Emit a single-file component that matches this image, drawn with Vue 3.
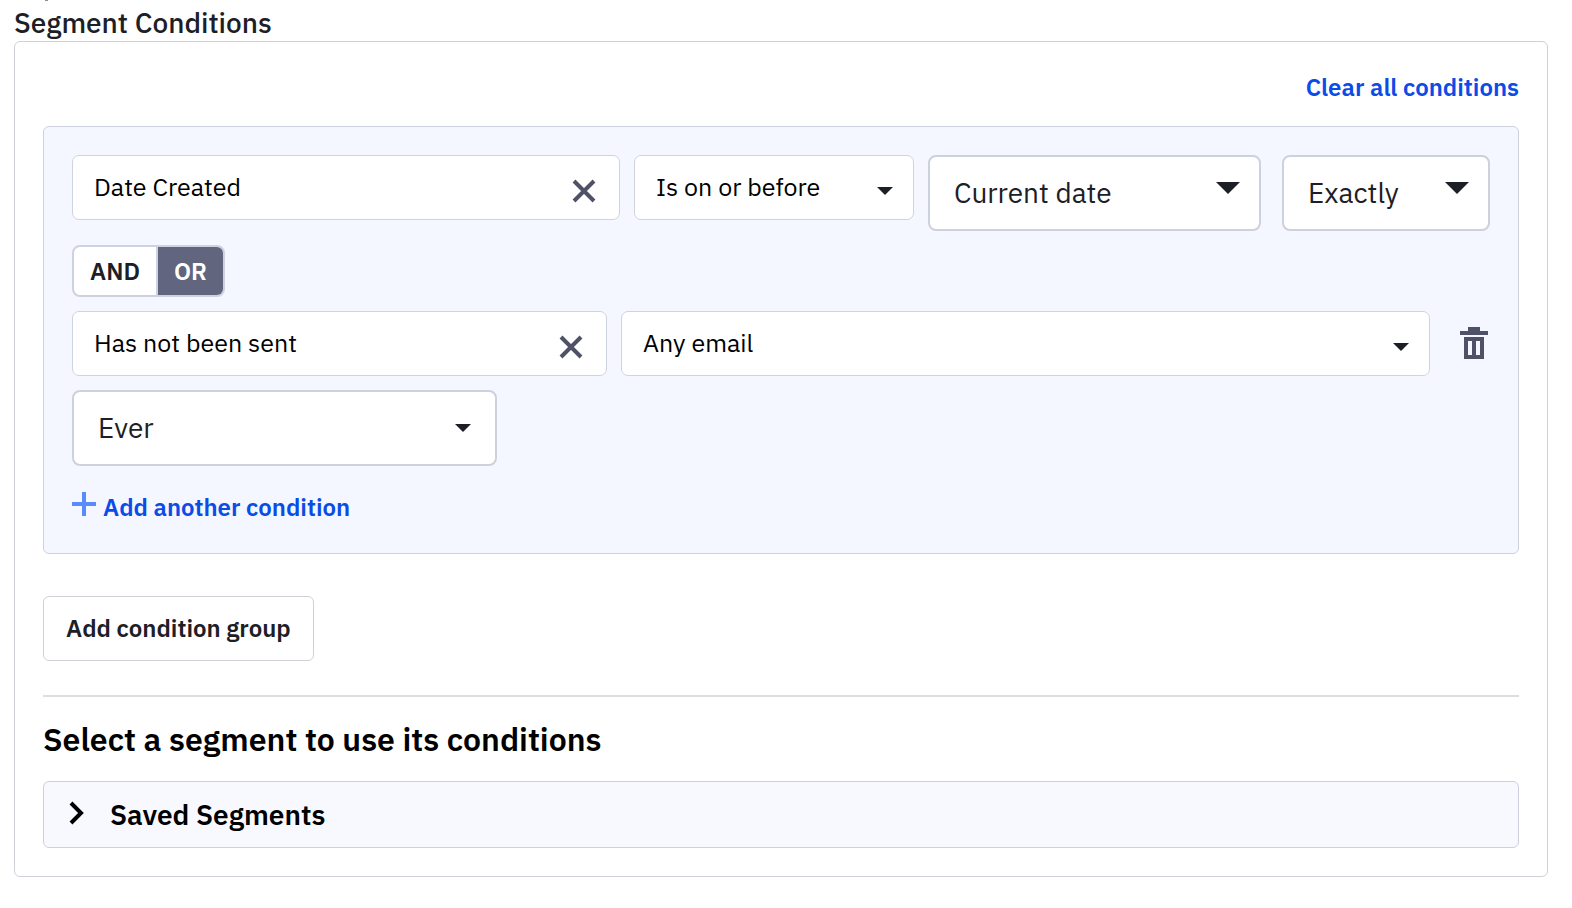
<script setup>
import { ref } from 'vue'

const attribute = ref('Date Created')
const comparison = ref('Is on or before')
const dateBase = ref('Current date')
const precision = ref('Exactly')
const operator = ref('OR')
const activity = ref('Has not been sent')
const email = ref('Any email')
const period = ref('Ever')
const savedOpen = ref(false)
</script>

<template>
  <main class="page">
    <h2 class="title">Segment Conditions</h2>
    <section class="panel">
      <div class="toolbar">
        <button class="link" type="button">Clear all conditions</button>
      </div>

      <div class="group">
        <div class="row">
          <div class="field w-attribute">
            <input v-model="attribute" class="control" type="text" aria-label="Attribute" />
            <button class="clear" type="button" aria-label="Clear attribute" @click="attribute = ''">
              <svg width="24" height="24" viewBox="0 0 24 24"><path d="M2 2L22 22M22 2L2 22" /></svg>
            </button>
          </div>
          <div class="field w-comparison">
            <select v-model="comparison" class="control" aria-label="Comparison">
              <option>Is on or before</option>
              <option>Is on or after</option>
            </select>
            <svg class="caret" width="16" height="8" viewBox="0 0 16 8"><path d="M0 0H16L8 8Z" /></svg>
          </div>
          <div class="field large w-date">
            <select v-model="dateBase" class="control" aria-label="Date">
              <option>Current date</option>
              <option>Specific date</option>
            </select>
            <svg class="caret big" width="24" height="12" viewBox="0 0 24 12"><path d="M0 0H24L12 12Z" /></svg>
          </div>
          <div class="field large w-precision">
            <select v-model="precision" class="control" aria-label="Precision">
              <option>Exactly</option>
              <option>Plus</option>
            </select>
            <svg class="caret big" width="24" height="12" viewBox="0 0 24 12"><path d="M0 0H24L12 12Z" /></svg>
          </div>
        </div>

        <div class="toggle" role="radiogroup" aria-label="Operator">
          <label class="option">
            <input v-model="operator" type="radio" name="operator" value="AND" />
            <span>AND</span>
          </label>
          <label class="option">
            <input v-model="operator" type="radio" name="operator" value="OR" />
            <span>OR</span>
          </label>
        </div>

        <div class="row">
          <div class="field w-activity">
            <input v-model="activity" class="control" type="text" aria-label="Activity" />
            <button class="clear" type="button" aria-label="Clear activity" @click="activity = ''">
              <svg width="24" height="24" viewBox="0 0 24 24"><path d="M2 2L22 22M22 2L2 22" /></svg>
            </button>
          </div>
          <div class="field w-email">
            <select v-model="email" class="control" aria-label="Email">
              <option>Any email</option>
            </select>
            <svg class="caret" width="16" height="8" viewBox="0 0 16 8"><path d="M0 0H16L8 8Z" /></svg>
          </div>
          <button class="trash" type="button" aria-label="Delete condition">
            <svg width="28" height="32" viewBox="0 0 28 32">
              <path fill-rule="evenodd" d="M8 0H20V4H28V8H0V4H8ZM4 10H24V32H4ZM8 14V28H12V14ZM16 14V28H20V14Z" />
            </svg>
          </button>
        </div>

        <div class="field large w-period">
          <select v-model="period" class="control" aria-label="Period">
            <option>Ever</option>
          </select>
          <svg class="caret mid" width="16" height="8" viewBox="0 0 16 8"><path d="M0 0H16L8 8Z" /></svg>
        </div>

        <button class="link add" type="button">
          <svg width="24" height="24" viewBox="0 0 24 24"><path d="M12 0V24M0 12H24" /></svg>
          <span>Add another condition</span>
        </button>
      </div>

      <button class="add-group" type="button">Add condition group</button>

      <hr class="divider" />

      <h3 class="subtitle">Select a segment to use its conditions</h3>
      <button class="saved" type="button" :aria-expanded="savedOpen" @click="savedOpen = !savedOpen">
        <svg width="16" height="24" viewBox="0 0 16 24"><path d="M2 2L12 12L2 22" /></svg>
        <span>Saved Segments</span>
      </button>
    </section>
  </main>
</template>

<style>
body {
  background: #fff;
}
</style>

<style scoped>
.page {
  position: relative;
  box-sizing: border-box;
  padding: 5px 24px 24px 14px;
  font-family: "IBM Plex Sans", "Open Sans", "Noto Sans", sans-serif;
  font-size: 24px;
  color: #1c2026;
}
.page::before {
  content: "";
  position: absolute;
  top: 0;
  left: 45px;
  width: 3px;
  height: 1px;
  background: #8b8d91;
}
.page * {
  box-sizing: border-box;
}
button,
input,
select {
  margin: 0;
  padding: 0;
  border: 0;
  background: none;
  color: inherit;
  font: inherit;
}
svg {
  display: block;
}
.title {
  margin: 0;
  font-size: 28px;
  line-height: 36px;
  font-weight: 500;
}
.panel {
  padding: 28px;
  border: 1px solid #cfd1d8;
  border-radius: 6px;
}
.toolbar {
  display: flex;
  justify-content: flex-end;
  margin-bottom: 22px;
}
.link {
  color: #0b4ce6;
  font-weight: 600;
  line-height: 34px;
}
.group {
  display: flex;
  flex-direction: column;
  align-items: flex-start;
  gap: 14px;
  padding: 28px;
  border: 1px solid #cdd1dd;
  border-radius: 6px;
  background: #f4f7ff;
}
.row {
  display: flex;
  align-items: flex-start;
  gap: 14px;
  width: 100%;
}
.field {
  position: relative;
  height: 65px;
  border: 1px solid #cfd3df;
  border-radius: 7px;
  background: #fff;
  color: #000;
  font-size: 25px;
}
.large {
  height: 76px;
  border: 2px solid #cdd1dd;
  border-radius: 8px;
  color: #1c2026;
  font-size: 28px;
}
.control {
  display: block;
  width: 100%;
  height: 100%;
  padding: 0 60px 2px 21px;
  appearance: none;
}
.large .control {
  padding-left: 24px;
}
.w-attribute { flex: 546 1 0; }
.w-comparison { flex: 278 1 0; }
.w-date { flex: 329 1 0; }
.w-precision {
  flex: 204 1 0;
  margin-left: 7px;
}
.w-activity { flex: 533 1 0; }
.w-email { flex: 807 1 0; }
.w-period { width: 30%; }
.clear {
  position: absolute;
  top: 23px;
  right: 23px;
}
.clear path {
  fill: none;
  stroke: #4f5266;
  stroke-width: 4;
}
.caret {
  position: absolute;
  top: 31px;
  right: 20px;
  fill: #1c2026;
  pointer-events: none;
}
.big {
  top: 25px;
  right: 19px;
}
.mid {
  top: 32px;
  right: 24px;
}
.toggle {
  display: flex;
  height: 52px;
  border: 2px solid #cdd1e0;
  border-radius: 8px;
  background: #fff;
  font-weight: 600;
  line-height: 48px;
  overflow: hidden;
}
.option {
  position: relative;
}
.option + .option {
  border-left: 2px solid #cdd1e0;
}
.option input {
  position: absolute;
  inset: 0;
  opacity: 0;
}
.option span {
  display: block;
  padding: 0 16px;
}
.option input:checked + span {
  background: #61657d;
  color: #fff;
}
.trash {
  margin: 16px 2px 0 16px;
  fill: #4f5266;
}
.add {
  display: flex;
  gap: 7px;
  margin: 10px 0 1px;
}
.add svg {
  margin-top: 2px;
}
.add path {
  fill: none;
  stroke: #5a8bfa;
  stroke-width: 4;
}
.add-group {
  display: block;
  height: 65px;
  margin-top: 42px;
  padding: 0 22px 2px;
  border: 1px solid #cfd1d8;
  border-radius: 6px;
  font-weight: 600;
}
.divider {
  height: 2px;
  margin: 34px 0 20px;
  border: 0;
  background: #dcdee1;
}
.subtitle {
  margin: 0 0 19px;
  color: #000;
  font-size: 32px;
  line-height: 45px;
  font-weight: 600;
}
.saved {
  display: flex;
  align-items: center;
  gap: 25px;
  width: 100%;
  height: 67px;
  padding: 0 25px;
  border: 1px solid #cdd1dd;
  border-radius: 6px;
  background: #f8f9fe;
  color: #000;
  font-size: 28px;
  font-weight: 600;
}
.saved svg {
  margin-bottom: 4px;
}
.saved path {
  fill: none;
  stroke: #000;
  stroke-width: 4;
}
</style>
